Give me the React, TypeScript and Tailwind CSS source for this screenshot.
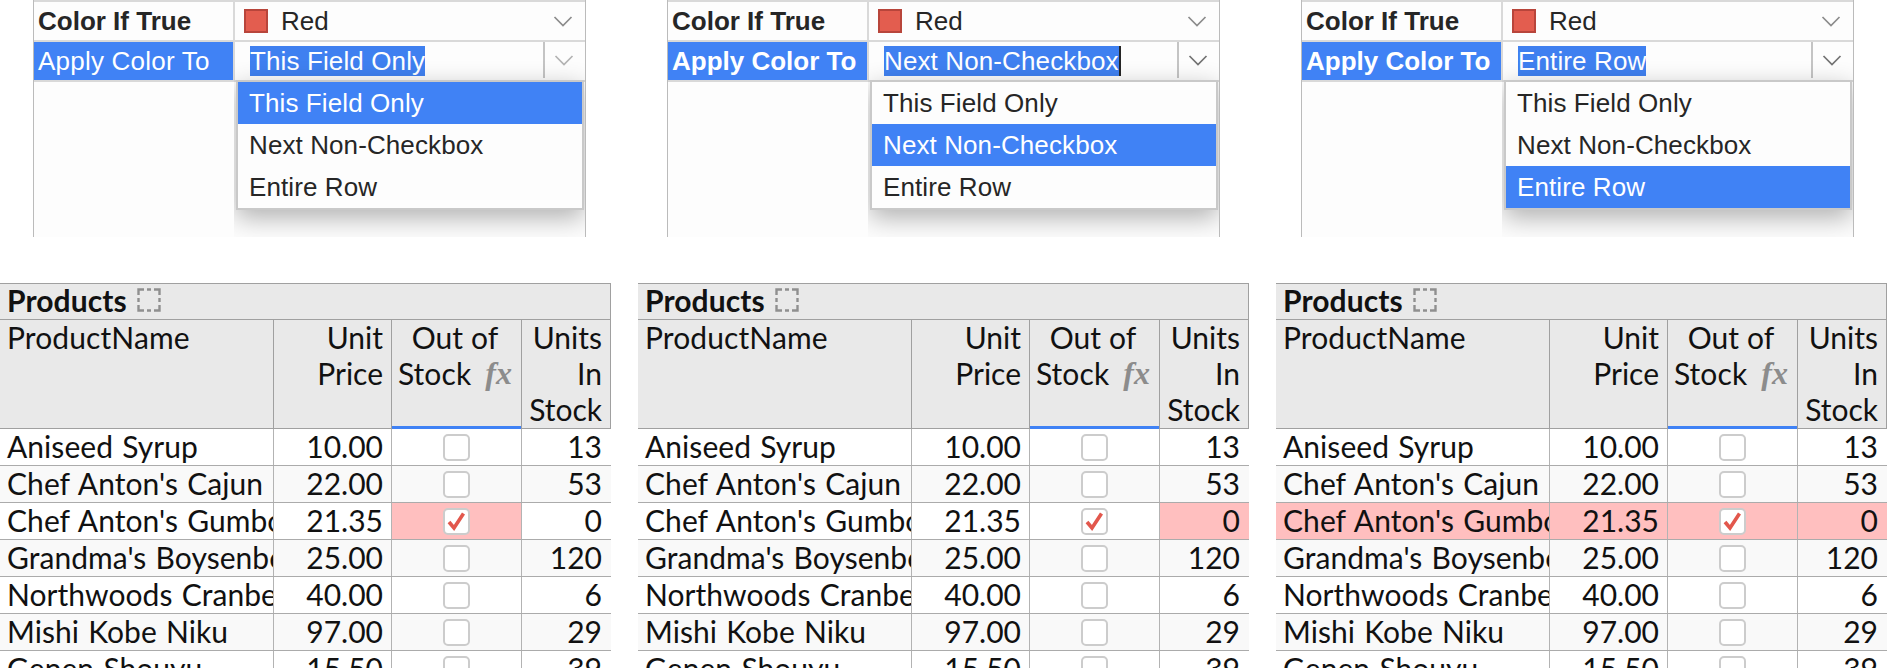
const OPTIONS = ["This Field Only", "Next Non-Checkbox", "Entire Row"];

const PRODUCTS = [
  { name: "Aniseed Syrup", price: "10.00", out: false, units: "13" },
  { name: "Chef Anton's Cajun Seasoning", price: "22.00", out: false, units: "53" },
  { name: "Chef Anton's Gumbo Mix", price: "21.35", out: true, units: "0" },
  { name: "Grandma's Boysenberry Spread", price: "25.00", out: false, units: "120" },
  { name: "Northwoods Cranberry Sauce", price: "40.00", out: false, units: "6" },
  { name: "Mishi Kobe Niku", price: "97.00", out: false, units: "29" },
  { name: "Genen Shouyu", price: "15.50", out: false, units: "39" },
];

function Chevron({ className }: { className: string }) {
  return (
    <svg width="20" height="11" viewBox="0 0 20 11" fill="none" className={className}>
      <path d="M1.5 1 L10 9.5 L18.5 1" stroke="currentColor" strokeWidth="1.7" />
    </svg>
  );
}

function RulePanel({ selected, className }: { selected: number; className: string }) {
  return (
    <div className={`relative h-[237px] w-[553px] shrink-0 overflow-hidden border-x border-x-[#bbbbbb] bg-[#fdfdfd] ${className}`}>
      <div className="h-[2px] bg-[#d9d9d9]" />
      <div className="flex h-[40px] border-b-2 border-[#d9d9d9]">
        <div className="w-[201px] border-r-2 border-[#d9d9d9] pl-[4px] text-[26px] leading-[38px] font-bold text-[#262626]">Color If True</div>
        <div className="flex flex-1 items-center">
          <span className="ml-[9px] h-[24px] w-[24px] border-2 border-[#b8453b] bg-[#e35d4f]" />
          <span className="ml-[13px] text-[26px] text-[#262626]">Red</span>
          <Chevron className="ml-auto mr-[12px] text-[#8c8c8c]" />
        </div>
      </div>
      <div className="flex h-[40px] border-b-2 border-[#d9d9d9]">
        <div className={`w-[199px] bg-[#4082f5] pl-[4px] text-[26px] leading-[38px] text-white ${selected === 0 ? "font-normal tracking-[0.22px]" : "font-bold"}`}>Apply Color To</div>
        <div className="relative flex flex-1 overflow-hidden border-l-2 border-[#d9d9d9]">
          <div className="flex-1 pl-[15px] pt-[4px]">
            <span className={`inline-block h-[30px] bg-[#3f80f0] text-[26px] leading-[30px] tracking-[0.12px] text-white ${selected === 1 ? "border-r-2 border-[#262626]" : ""}`}>{OPTIONS[selected]}</span>
          </div>
          <div className="mb-[2px] flex w-[42px] items-center justify-center border-l-2 border-[#c4c4c4] pr-[2px]">
            <Chevron className={selected === 0 ? "text-[#b3b3b3]" : "text-[#737373]"} />
          </div>
        </div>
      </div>
      <div className="absolute inset-y-0 right-0 left-[200px] overflow-hidden">
        <div className="absolute top-[80px] left-[2px] w-[348px] border-2 border-[#c9c9c9] bg-[#fdfdfd] shadow-[0_8px_24px_rgba(0,0,0,0.3)]">
          {OPTIONS.map((option, i) => (
            <div key={option} className={`h-[42px] pl-[11px] text-[26px] leading-[42px] tracking-[0.1px] ${i === selected ? "bg-[#4082f5] text-white" : "text-[#262626]"}`}>
              {option}
            </div>
          ))}
        </div>
      </div>
    </div>
  );
}

function DashedSquare() {
  return (
    <svg width="24" height="24" viewBox="0 0 24 24" fill="none" className="ml-[10px] text-[#8f8f8f]">
      <path d="M1.5 7 V1.5 H7 M10 1.5 H14 M17 1.5 H22.5 V7 M22.5 10 V14 M22.5 17 V22.5 H17 M14 22.5 H10 M7 22.5 H1.5 V17 M1.5 14 V10" stroke="currentColor" strokeWidth="2.4" />
    </svg>
  );
}

function Checkbox({ checked }: { checked: boolean }) {
  return (
    <div className="flex h-[27px] w-[27px] items-center justify-center rounded-[5px] border-2 border-[#cccccc] bg-white">
      {checked && (
        <svg width="21" height="21" viewBox="0 0 21 21" fill="none">
          <path d="M3 11 L8 17 L17.5 2.5" stroke="#e2574c" strokeWidth="3.6" />
        </svg>
      )}
    </div>
  );
}

function ProductsTable({ mode, className }: { mode: "field" | "next" | "row"; className: string }) {
  const pink = "bg-[#ffbfbf]";
  return (
    <div className={`w-[611px] shrink-0 font-['Lato',sans-serif] text-[30px] text-[#111111] ${className}`}>
      <div className="flex h-[37px] items-center border-y border-r border-[#a0a0a0] bg-[#e9e9e9] pb-[3px] pl-[7px]">
        <span className="font-bold leading-[32px] tracking-[0.1px]">Products</span>
        <DashedSquare />
      </div>
      <div className="flex h-[109px] border-b border-r border-[#a0a0a0] bg-[#e9e9e9] leading-[36px]">
        <div className="w-[273px] pl-[7px] tracking-[0.1px]">
          <div className="-mt-px">ProductName</div>
        </div>
        <div className="w-[118px] border-l border-[#a0a0a0] pr-[8px] text-right">
          <div className="-mt-px">Unit<br />Price</div>
        </div>
        <div className="relative w-[130px] border-l border-[#a0a0a0] pr-[3px] text-center tracking-[0.1px]">
          <div className="-mt-px">
            Out of<br />
            <span className="flex items-center justify-center gap-[14px]">
              Stock
              <span className="font-['Liberation_Serif',serif] text-[32px] leading-[36px] font-bold italic text-[#8c8c8c]">fx</span>
            </span>
          </div>
          <div className="absolute inset-x-0 -bottom-px h-[3px] bg-[#4082f5]" />
        </div>
        <div className="flex-1 border-l border-[#a0a0a0] pr-[8px] text-right">
          <div className="-mt-px">Units<br />In<br />Stock</div>
        </div>
      </div>
      {PRODUCTS.map((p, i) => {
        const zebra = i % 2 === 1 ? "bg-[#f9f9f9]" : "bg-white";
        const hl = p.out;
        return (
          <div key={p.name} className={`flex h-[37px] border-b border-[#ababab] leading-[34px] ${hl && mode === "row" ? pink : zebra}`}>
            <div className="w-[273px] overflow-hidden whitespace-nowrap pl-[7px] tracking-[0.05px] [word-spacing:1.5px]">{p.name}</div>
            <div className="w-[118px] border-l border-[#b3b3b3] pr-[8px] text-right">{p.price}</div>
            <div className={`flex w-[130px] items-center justify-center border-l border-[#b3b3b3] ${hl && mode === "field" ? pink : ""}`}>
              <Checkbox checked={p.out} />
            </div>
            <div className={`flex-1 border-l border-[#b3b3b3] pr-[9px] text-right ${hl && mode === "next" ? pink : ""}`}>{p.units}</div>
          </div>
        );
      })}
    </div>
  );
}

export default function App() {
  return (
    <div className="h-[668px] w-[1888px] overflow-hidden bg-white font-['Liberation_Sans',sans-serif]">
      <div className="flex">
        <RulePanel selected={0} className="ml-[33px]" />
        <RulePanel selected={1} className="ml-[81px]" />
        <RulePanel selected={2} className="ml-[81px]" />
      </div>
      <div className="mt-[46px] flex">
        <ProductsTable mode="field" className="" />
        <ProductsTable mode="next" className="ml-[27px]" />
        <ProductsTable mode="row" className="ml-[27px]" />
      </div>
    </div>
  );
}
